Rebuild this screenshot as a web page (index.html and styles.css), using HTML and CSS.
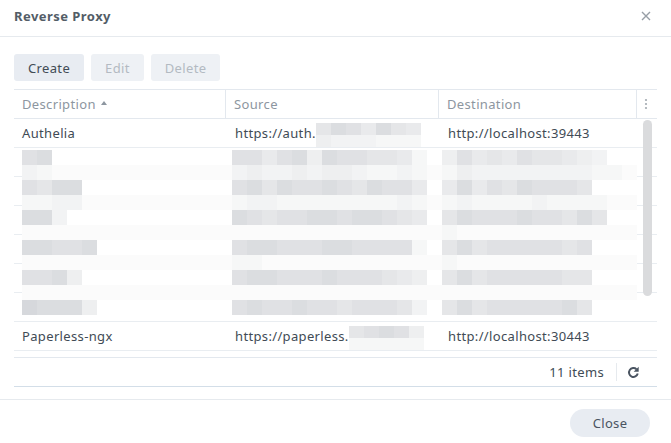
FILE: index.html
```html
<!DOCTYPE html>
<html lang="en">
<head>
  <meta charset="UTF-8" />
  <title>Reverse Proxy</title>
  <link rel="stylesheet" href="styles.css">
</head>
<body>

<div class="dialog">
  <div class="dialog-header">
    <span class="dialog-title">Reverse Proxy</span>
    <svg class="close-x" width="10" height="10" viewBox="0 0 10 10">
      <path d="M1 1L9 9M9 1L1 9" stroke="#979ea6" stroke-width="1.4" fill="none"/>
    </svg>
  </div>

  <div class="dialog-body">
    <div class="toolbar">
      <button class="btn">Create</button>
      <button class="btn disabled">Edit</button>
      <button class="btn disabled">Delete</button>
    </div>

    <div class="grid">
      <div class="grid-head">
        <div class="hcell">Description <span class="sort-up"></span></div>
        <div class="hcell">Source</div>
        <div class="hcell">Destination</div>
        <div class="hcell menu-cell">
          <svg width="4" height="12" viewBox="0 0 4 12">
            <circle cx="2" cy="2" r="1.1" fill="#a3aab1"/>
            <circle cx="2" cy="6" r="1.1" fill="#a3aab1"/>
            <circle cx="2" cy="10" r="1.1" fill="#a3aab1"/>
          </svg>
        </div>
      </div>

      <div class="grid-body">
        <div class="row">
          <div class="cell first">Authelia</div>
          <div class="cell">https://auth.<span class="blur" id="blurAuth"></span></div>
          <div class="cell">http://localhost:39443</div>
        </div>
        <div class="row"><div class="cell first"></div><div class="cell"></div><div class="cell"></div></div>
        <div class="row"><div class="cell first"></div><div class="cell"></div><div class="cell"></div></div>
        <div class="row"><div class="cell first"></div><div class="cell"></div><div class="cell"></div></div>
        <div class="row"><div class="cell first"></div><div class="cell"></div><div class="cell"></div></div>
        <div class="row"><div class="cell first"></div><div class="cell"></div><div class="cell"></div></div>
        <div class="row"><div class="cell first"></div><div class="cell"></div><div class="cell"></div></div>
        <div class="row">
          <div class="cell first">Paperless-ngx</div>
          <div class="cell">https://paperless.<span class="blur" id="blurPaper"></span></div>
          <div class="cell">http://localhost:30443</div>
        </div>

        <!-- pixelated rows laid over the hidden entries -->
        <div class="mosaic" id="mosaic"></div>
        <div class="scroll-thumb"></div>
      </div>

      <div class="grid-foot">
        <span class="count">11 items</span>
        <span class="foot-sep"></span>
        <svg class="refresh" width="13" height="13" viewBox="0 0 14 14">
          <path d="M11.6 8.2A4.8 4.8 0 1 1 10.2 3.4" stroke="#4a5461" stroke-width="2.1" fill="none"/>
          <path d="M12.6 0.8V6.2H7.2Z" fill="#4a5461"/>
        </svg>
      </div>
    </div>
  </div>

  <div class="dialog-footer">
    <button class="btn pill">Close</button>
  </div>
</div>

<script>
  // each mosaic row: [description, source, destination] cells, 15px each
  const mosaicRows = [
    ["dark",  "cb",    "ccecbfbccddeh", "fcedecddefg"],
    ["light", "gh",    "gfggfgffghhgh", "hfgggggggghh"],
    ["dark",  "cdbb",  "cbdbccbcdbcce", "ebecdbcccd"],
    ["light", "hhgg",  "hgghhhhhhhhgh", "hghhhhghhhh"],
    ["dark",  "bbg",   "bcdccbbcbbcde", "dbcccbccdbd"],
    ["light", "",      "",              "h"],
    ["dark",  "bbccb", "cbbcccbbcccch", "dbdcccccdc"],
    ["light", "",      "hh",            "h"],
    ["dark",  "ccbf",  "cbbcccbcccdef", "dbdcccccdd"],
    ["light", "",      "",              ""],
    ["dark",  "abbbf", "cbccbccdcccdg", "dbdcccccbd"]
  ];

  function buildCells(parent, pattern) {
    for (const ch of pattern) {
      const cell = document.createElement("span");
      cell.className = "px px-" + ch;
      parent.appendChild(cell);
    }
  }

  const mosaic = document.getElementById("mosaic");
  mosaicRows.forEach(r => {
    const row = document.createElement("div");
    row.className = "mrow " + r[0];
    for (let i = 1; i < 4; i++) {
      const seg = document.createElement("div");
      seg.className = "mseg";
      buildCells(seg, r[i]);
      row.appendChild(seg);
    }
    mosaic.appendChild(row);
  });

  function buildBlur(id, top, bottom) {
    const el = document.getElementById(id);
    [top, bottom].forEach(p => {
      const line = document.createElement("span");
      line.className = "bline";
      buildCells(line, p);
      el.appendChild(line);
    });
  }

  buildBlur("blurAuth", "dbcebde", "fggghhh");
  buildBlur("blurPaper", "dcbcf", "hhhhh");
</script>

</body>
</html>
```

FILE: styles.css
```css
body {
  margin: 0;
  font-family: "Noto Sans", "Open Sans", sans-serif;
  font-size: 13px;
  letter-spacing: 0.35px;
  color: #414b55;
  background: #ffffff;
}

.dialog {
  width: 671px;
  height: 443px;
  display: flex;
  flex-direction: column;
}

.dialog-header {
  height: 32px;
  padding: 0 20px 4px 14px;
  border-bottom: 1px solid #e6eaee;
  display: flex;
  align-items: center;
  justify-content: space-between;
}

.dialog-title {
  font-weight: bold;
  letter-spacing: 0.45px;
  color: #535d67;
}

.dialog-body {
  padding: 17px 14px 0;
}

.toolbar {
  display: flex;
  gap: 7px;
}

.btn {
  height: 27px;
  padding: 0 14px;
  border: none;
  border-radius: 3px;
  background: #e8ecf2;
  color: #414b55;
  font-family: inherit;
  font-size: 13px;
  letter-spacing: 0.35px;
}

.btn.disabled {
  background: #eef1f5;
  color: #b3bac2;
}

.grid {
  margin-top: 8px;
  border-top: 1px solid #e3e8ee;
}

.grid-head {
  display: grid;
  grid-template-columns: 212px 213px 198px 20px;
  height: 28px;
  border-bottom: 1px solid #e3e8ee;
}

.hcell {
  display: flex;
  align-items: center;
  padding-left: 8px;
  color: #8d96a0;
  border-right: 1px solid #e3e8ee;
}

.menu-cell {
  border-right: none;
  padding-left: 7px;
}

.sort-up {
  display: inline-block;
  margin-left: 5px;
  margin-top: -2px;
  border-left: 3px solid transparent;
  border-right: 3px solid transparent;
  border-bottom: 4px solid #8d96a0;
}

.grid-body {
  position: relative;
  height: 238px;
  overflow: hidden;
}

.row {
  display: grid;
  grid-template-columns: 212px 213px 218px;
  height: 28px;
  border-bottom: 1px solid #e9edf1;
}

.cell {
  display: flex;
  align-items: center;
  padding-left: 9px;
  white-space: nowrap;
}

.cell.first {
  padding-left: 8px;
}

.blur {
  display: inline-flex;
  flex-direction: column;
  margin-top: 3px;
}

.bline {
  display: flex;
  height: 12px;
}

.bline .px {
  height: 12px;
}

.mosaic {
  position: absolute;
  top: 31px;
  left: 8px;
  width: 615px;
}

.mrow {
  height: 15px;
  display: grid;
  grid-template-columns: 210px 210px 195px;
}

.mrow.light {
  background: #fbfbfb;
}

.mseg {
  display: flex;
}

.px {
  width: 15px;
  height: 15px;
  flex: none;
}

.px-a { background: #d6d8dc; }
.px-b { background: #dbdde0; }
.px-c { background: #e0e1e4; }
.px-d { background: #e5e6e8; }
.px-e { background: #e9eaec; }
.px-f { background: #eeeff0; }
.px-g { background: #f2f3f4; }
.px-h { background: #f6f7f7; }

.scroll-thumb {
  position: absolute;
  top: 1px;
  left: 629px;
  width: 9px;
  height: 176px;
  border-radius: 5px;
  background: #dadbdd;
}

.grid-foot {
  height: 28px;
  border-top: 1px solid #e3e8ee;
  border-bottom: 1px solid #d3dee8;
  display: flex;
  align-items: center;
  justify-content: flex-end;
  padding-right: 17px;
}

.foot-sep {
  width: 1px;
  height: 18px;
  background: #e6eaee;
  margin: 0 10px 0 12px;
}

.dialog-footer {
  margin-top: 12px;
  border-top: 1px solid #e6eaee;
  padding: 9px 21px 0 0;
  display: flex;
  justify-content: flex-end;
}

.btn.pill {
  height: 28px;
  width: 80px;
  border-radius: 14px;
  color: #4a5461;
}
```
